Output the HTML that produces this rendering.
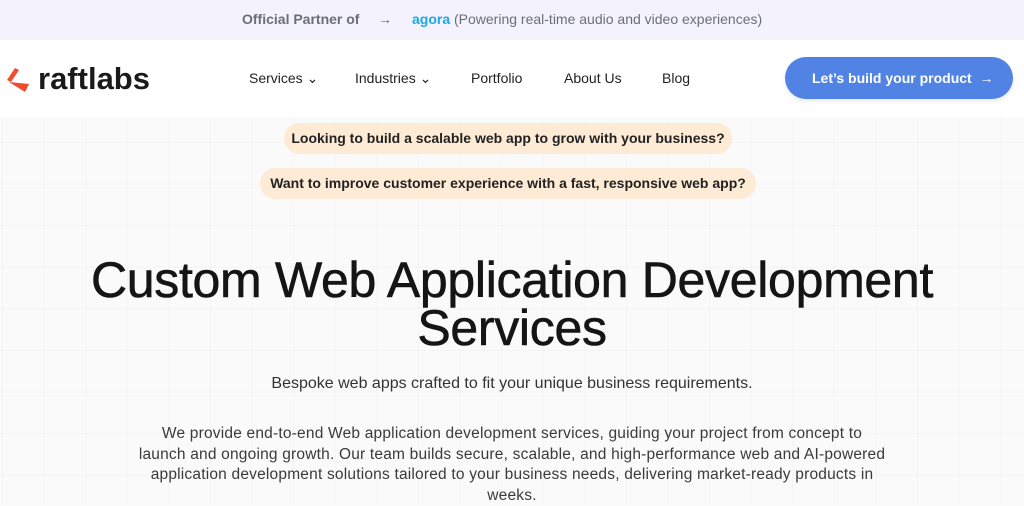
<!DOCTYPE html>
<html><head><meta charset="utf-8"><style>
*{margin:0;padding:0;box-sizing:border-box}
body{width:1024px;height:504px;overflow:hidden;font-family:"Liberation Sans",sans-serif;background:#fafafb;position:relative;color:#111}
.top{position:absolute;left:0;top:0;width:1024px;height:40px;background:#f3f2fd;font-size:14px;color:#6b6e78}
.top span{position:absolute;top:11px}
.nav{position:absolute;top:40px;left:0;width:1024px;height:77px;background:#fff}
.grid{position:absolute;top:117px;left:0;width:1024px;height:387px;
background-image:linear-gradient(to right,rgba(0,0,0,.025) 1px,transparent 1px),linear-gradient(to bottom,rgba(0,0,0,.025) 1px,transparent 1px);
background-size:41.6px 41.6px;background-position:2px 25px}
.nl{position:absolute;top:30px;font-size:14px;color:#222}
.btn{position:absolute;left:785px;top:17px;width:228px;height:42px;border-radius:21px;background:#5183e4;color:#fff;font-size:14px;font-weight:bold;line-height:42px;padding-left:27px;box-shadow:0 2px 4px rgba(0,0,0,.1)}
.pill{position:absolute;height:31px;border-radius:16px;background:#fdebd6;font-size:14px;font-weight:bold;color:#222;line-height:31px;text-align:center}
h1{position:absolute;left:0;top:256px;width:1024px;text-align:center;font-size:50px;font-weight:normal;line-height:48px;letter-spacing:-0.3px;color:#151515;-webkit-text-stroke:.6px #151515}
.sub{position:absolute;top:375px;width:1024px;text-align:center;font-size:16px;color:#333}
.p{position:absolute;top:424px;left:100px;width:824px;text-align:center;font-size:15.5px;line-height:20.5px;color:#3a3a3a;letter-spacing:.2px;white-space:nowrap}
</style></head><body>
<div class="top"><span style="left:242px;font-weight:bold">Official Partner of</span><span style="left:378px">→</span><span style="left:412px;color:#1fa8e0;font-weight:bold">agora</span><span style="left:454px">(Powering real-time audio and video experiences)</span></div>
<div class="nav">
<svg style="position:absolute;left:5px;top:26px" width="28" height="28" viewBox="0 0 28 28"><path d="M10 2 L14 4 L6 16 L2 14 Z" fill="#f04a2f"/><path d="M4 16 L24 18 L20 26 Z" fill="#f04a2f"/></svg>
<span style="position:absolute;left:38px;top:21px;font-size:31px;font-weight:bold;color:#1a1a1a">raftlabs</span>
<span class="nl" style="left:249px">Services ⌄</span>
<span class="nl" style="left:355px">Industries ⌄</span>
<span class="nl" style="left:471px">Portfolio</span>
<span class="nl" style="left:564px">About Us</span>
<span class="nl" style="left:662px">Blog</span>
<div class="btn">Let’s build your product &nbsp;→</div>
</div>
<div class="grid"></div>
<div class="pill" style="left:284px;top:123px;width:448px">Looking to build a scalable web app to grow with your business?</div>
<div class="pill" style="left:260px;top:168px;width:496px">Want to improve customer experience with a fast, responsive web app?</div>
<h1>Custom Web Application Development<br>Services</h1>
<div class="sub">Bespoke web apps crafted to fit your unique business requirements.</div>
<div class="p">We provide end-to-end Web application development services, guiding your project from concept to<br>launch and ongoing growth. Our team builds secure, scalable, and high-performance web and AI-powered<br>application development solutions tailored to your business needs, delivering market-ready products in<br>weeks.</div>
</body></html>
